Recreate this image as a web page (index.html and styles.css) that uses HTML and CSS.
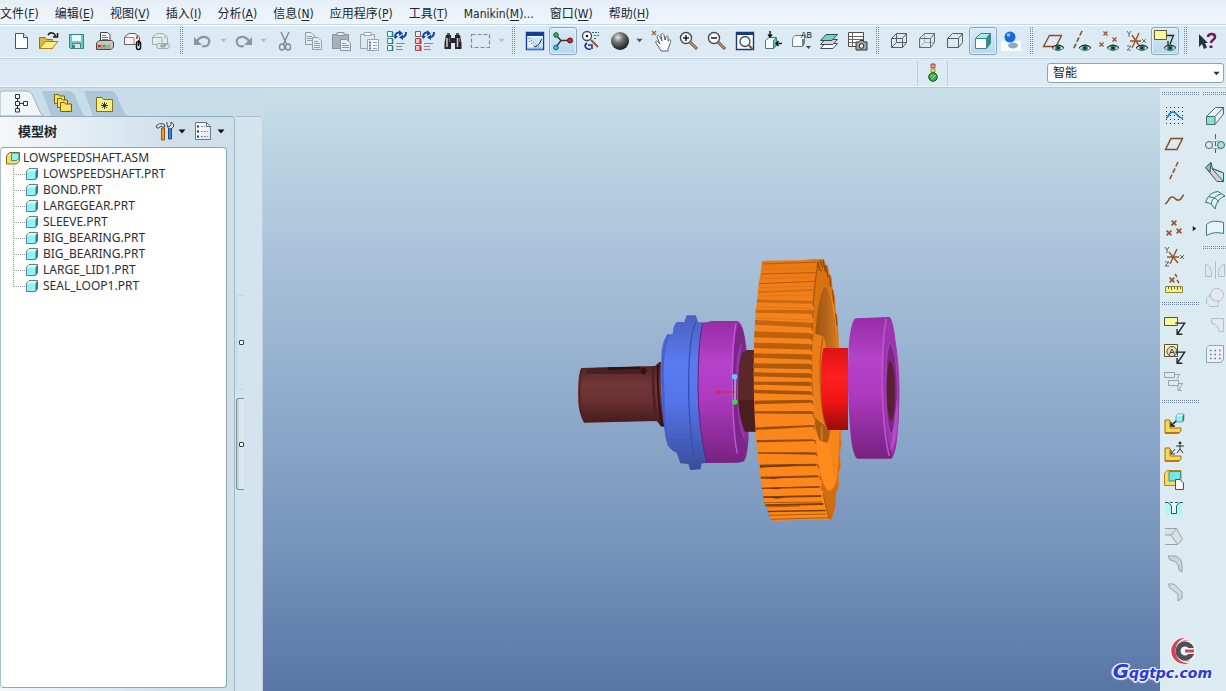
FILE: index.html
```html
<!DOCTYPE html>
<html lang="zh-CN">
<head>
<meta charset="utf-8">
<title>LOWSPEEDSHAFT</title>
<link rel="stylesheet" href="styles.css">
</head>
<body>
<svg class="defs" aria-hidden="true">
  <defs>
    <linearGradient id="sheet" x1="0" y1="0" x2="1" y2="1"><stop offset="0" stop-color="#fff"/><stop offset="1" stop-color="#dfe6ee"/></linearGradient>
    <radialGradient id="ball" cx=".38" cy=".3" r=".7"><stop offset="0" stop-color="#e8e8e8"/><stop offset=".4" stop-color="#777"/><stop offset="1" stop-color="#1c1c1c"/></radialGradient>
    <symbol id="eye" viewBox="0 0 12 8"><path d="M0 4Q6-2 12 4Q6 9 0 4Z" fill="#dfe9ee" stroke="#555" stroke-width=".8"/><circle cx="6" cy="4" r="2.8" fill="#287a6c"/><circle cx="6" cy="4" r="1.2" fill="#052b28"/><path d="M0 3.600Q6-1.500 12 3.600" fill="none" stroke="#222"/></symbol>
    <symbol id="part" viewBox="0 0 14 14"><path d="M1.500 4.500L4 1.500H12.500V9.500L10.500 12.500H1.500Z" fill="#8cf4f4" stroke="#5a8088"/><path d="M10.500 4V12.500L12.500 10V1.500Z" fill="#2f7a82"/><path d="M2 4.500L4 2H12L10.500 4.500Z" fill="#d4fcfc"/></symbol>
    <symbol id="asm" viewBox="0 0 15 14"><path d="M.500 4.500L3.500 1.500H13.500V10L10.500 13H.500Z" fill="#f6dc6a" stroke="#8c6a1c"/><path d="M5.500 2H13V7L10.500 9.500H5.500Z" fill="#8cf4f4" stroke="#3c6a74" stroke-width=".8"/></symbol>
    <symbol id="branch" viewBox="0 0 12 16"><path d="M.500 0V16M1 8.500H12" stroke="#9a9a9a" stroke-dasharray="1 1" fill="none"/></symbol>
    <symbol id="branch-end" viewBox="0 0 12 16"><path d="M.500 0V9M1 8.500H12" stroke="#9a9a9a" stroke-dasharray="1 1" fill="none"/></symbol>
    <symbol id="down" viewBox="0 0 8 5"><path d="M.500.500H7.500L4 4.500Z" fill="currentColor"/></symbol>
    <symbol id="cross" viewBox="0 0 5 5"><path d="M.500.500L4.500 4.500M4.500.500L.500 4.500" stroke="#97532a" stroke-width="1.300"/></symbol>
    <symbol id="leader" viewBox="0 0 10 12"><path d="M1 1H9L3 10M2.500 6V10.500H7" fill="none" stroke="currentColor" stroke-width="1.200"/></symbol>
    <symbol id="elbow" viewBox="0 0 18 15"><path d="M1 1H6V9H17V12L15 14H1Z" fill="#f7d94e" stroke="#a86c14"/><path d="M15 14H1" stroke="#c06010" stroke-width="1.500"/></symbol>
  </defs>
</svg>

<header>
<nav class="menubar" aria-label="菜单">
  <button>文件(<u>F</u>)</button><button>编辑(<u>E</u>)</button><button>视图(<u>V</u>)</button><button>插入(<u>I</u>)</button><button>分析(<u>A</u>)</button><button>信息(<u>N</u>)</button><button>应用程序(<u>P</u>)</button><button>工具(<u>T</u>)</button><button>Manikin(<u>M</u>)...</button><button>窗口(<u>W</u>)</button><button>帮助(<u>H</u>)</button>
</nav>

<div class="toolbar" role="toolbar" aria-label="工具栏">
  <button class="tool" aria-label="新建"><svg viewBox="0 0 24 24"><path d="M6.500 4.500H14.500L18.500 8.500V19.500H6.500Z" fill="#fff" stroke="#4c5058"/><path d="M14.500 4.500V8.500H18.500" fill="#dde4ec" stroke="#4c5058"/></svg></button>
  <button class="tool" aria-label="打开"><svg viewBox="0 0 24 24"><path d="M2.500 19.500V8.500H8L9.500 10.500H15.500V19.500Z" fill="#d9b840" stroke="#8d7420"/><path d="M2.500 19.500L8.500 12.500H21L15 19.500Z" fill="#ffec82" stroke="#a08424"/><path d="M11 6C13 3 17 3 18.500 7M20.500 4V8H16" fill="none" stroke="#111" stroke-width="1.500"/></svg></button>
  <button class="tool" aria-label="保存"><svg viewBox="0 0 24 24"><path d="M4.500 5.500H18.500V19.500H5.500L4.500 18.500Z" fill="#5fcfc9" stroke="#27888a"/><path d="M7 6H16V12H7Z" fill="#f4fafc"/><path d="M7.500 14.500H15.500V19.500H7.500Z" fill="#dde4e8" stroke="#4e7c88"/><path d="M9 16V19" stroke="#357" stroke-width="1.500"/></svg></button>
  <button class="tool" aria-label="打印"><svg viewBox="0 0 24 24"><path d="M7.500 12V3.500H14.500L17 6V12" fill="#fff" stroke="#444"/><path d="M9 6.500H13M9 8.500H15M9 10.500H15" stroke="#777"/><path d="M3.500 14L6 11.500H18.500L20.500 13V18L18 20.500H3.500Z" fill="#c9c9b8" stroke="#494940"/><path d="M4 15.500H17.500V20H4Z" fill="#a9a998"/><path d="M5 17H8" stroke="#e22" stroke-width="2"/><path d="M10 17H12" stroke="#3a3" stroke-width="2"/></svg></button>
  <button class="tool" aria-label="发送附件"><svg viewBox="0 0 24 24"><path d="M3.500 15.500V8L8 4.500H14L18.500 8V15.500Z" fill="#fbf1f2" stroke="#686068"/><path d="M3.500 8.500H13V15" fill="none" stroke="#96868c"/><path d="M16 7V10" stroke="#c22" stroke-width="1.500"/><rect x="15.500" y="12.500" width="4" height="8" rx="2" fill="none" stroke="#111" stroke-width="1.500"/><path d="M17.500 11V17" stroke="#111"/></svg></button>
  <button class="tool" aria-label="发送链接"><svg viewBox="0 0 24 24" fill="none" stroke="#9eabb2"><path d="M3.500 15.500V8L8 4.500H14L18.500 8V15.500Z" fill="#e3ecec"/><path d="M3.500 8.500H13V15M16 7V10"/><rect x="7.500" y="14.500" width="8" height="5" rx="2.500" fill="#dce8ee"/><rect x="12.500" y="14.500" width="8" height="5" rx="2.500"/><path d="M11 17H17" stroke="#77858c"/></svg></button>
  <span class="grip"></span>
  <span class="split"><button class="tool" aria-label="撤消"><svg viewBox="0 0 24 24"><path d="M6 12C11 5 20 8 18 14C17 17 14 18 11 17" fill="none" stroke="#8697a5" stroke-width="2.200"/><path d="M3 8V16H11Z" fill="#8697a5"/></svg></button><button class="drop off" aria-label="撤消列表"><svg><use href="#down"/></svg></button></span>
  <span class="split"><button class="tool" aria-label="重做"><svg viewBox="0 0 24 24"><path d="M18 12C13 5 4 8 6 14C7 17 10 18 13 17" fill="none" stroke="#8697a5" stroke-width="2.200"/><path d="M21 8V16H13Z" fill="#8697a5"/></svg></button><button class="drop off" aria-label="重做列表"><svg><use href="#down"/></svg></button></span>
  <button class="tool" aria-label="剪切"><svg viewBox="0 0 24 24" fill="none" stroke="#7c8994" stroke-width="1.400"><path d="M8 3L13.500 15M16 3L10.500 15"/><ellipse cx="9" cy="18" rx="2.500" ry="3"/><ellipse cx="15" cy="18" rx="2.500" ry="3"/></svg></button>
  <button class="tool" aria-label="复制"><svg viewBox="0 0 24 24" fill="#e4edf3" stroke="#93a0aa"><path d="M4.500 3.500H10L13.500 7V15.500H4.500Z"/><path d="M6 7.500H11M6 9.500H11M6 11.500H11"/><path d="M11.500 8.500H17L20.500 12V20.500H11.500Z"/><path d="M13 12.500H17M13 14.500H19M13 16.500H19M13 18.500H19"/></svg></button>
  <button class="tool" aria-label="粘贴"><svg viewBox="0 0 24 24" stroke="#89959e"><path d="M3.500 5.500H19.500V19.500H3.500Z" fill="#a7b1b9"/><path d="M8 6.500V3.500H15V6.500Z" fill="#dde7ed"/><path d="M11.500 10.500H17.500L21.500 14V21.500H11.500Z" fill="#e8f0f5"/><path d="M13 14.500H17M13 16.500H20M13 18.500H20"/></svg></button>
  <button class="tool" aria-label="选择性粘贴"><svg viewBox="0 0 24 24" stroke="#99a5ae"><path d="M3.500 5.500H17.500V19.500H3.500Z" fill="#dde8ef"/><path d="M7 6.500V3.500H14V6.500Z" fill="#eef4f7"/><path d="M10.500 10.500H21.500V21.500H10.500Z" fill="#eff5f8"/><path d="M12 13.500H14M12 16.500H14M12 19.500H14" stroke="#707d86" stroke-width="2"/><path d="M16 13.500H20M16 16.500H20M16 19.500H20"/></svg></button>
  <button class="tool" aria-label="再生"><svg viewBox="0 0 24 24"><g fill="#dff" stroke="#4f787c"><path d="M2.500 2.500H7.500V7.500H2.500ZM2.500 9.500H7.500V14.500H2.500ZM2.500 16.500H7.500V21.500H2.500Z"/></g><path d="M7.500 3V8M7.500 10V15M7.500 17V22" stroke="#1c8080" stroke-width="1.500"/><path d="M10 8C10 4 13 3 15 4M21 3C21 7 19 8 17 8" fill="none" stroke="#1547a8" stroke-width="2"/><path d="M14 1L18 4.500L14 7ZM18 5.500L14 8.500L18 11ZM8 7H13L10.500 10Z" fill="#1547a8"/><path d="M11 14.500H20M11 17.500H17M11 20.500H18" stroke="#889"/></svg></button>
  <button class="tool" aria-label="再生管理器"><svg viewBox="0 0 24 24"><g fill="#fbb" stroke="#875457"><path d="M2.500 2.500H7.500V7.500H2.500Z" fill="#eee"/><path d="M2.500 9.500H7.500V14.500H2.500ZM2.500 16.500H7.500V21.500H2.500Z"/></g><path d="M7.500 10V15M7.500 17V22" stroke="#c33" stroke-width="2"/><path d="M10 8C10 4 13 3 15 4M21 3C21 7 19 8 17 8" fill="none" stroke="#1547a8" stroke-width="2"/><path d="M14 1L18 4.500L14 7ZM18 5.500L14 8.500L18 11ZM8 7H13L10.500 10Z" fill="#1547a8"/><path d="M11 14.500H20M11 17.500H17M11 20.500H18" stroke="#889"/></svg></button>
  <button class="tool" aria-label="查找"><svg viewBox="0 0 24 24"><path d="M5 6H10V9H14V6H19L20.500 14V20H14V14H10V20H3.500V14Z" fill="#25252a"/><path d="M6 4H9V6H6ZM15 4H18V6H15Z" fill="#555"/><path d="M6 9V18M16.500 9V18" stroke="#d4d0bc" stroke-width="1.500"/><path d="M8 9L9 13M18 9L19 13" stroke="#888"/></svg></button>
  <span class="split"><button class="tool" aria-label="选取框"><svg viewBox="0 0 24 24"><rect x="2.500" y="5.500" width="18" height="13" fill="none" stroke="#7d8b96" stroke-width="1.200" stroke-dasharray="4 2"/></svg></button><button class="drop off" aria-label="选取方式"><svg><use href="#down"/></svg></button></span>
  <span class="grip"></span>
  <button class="tool" aria-label="重画"><svg viewBox="0 0 24 24"><path d="M3.500 3.500H20.500V20.500H3.500Z" fill="#fff" stroke="#153a90" stroke-width="1.400"/><path d="M3 3H21V7H3Z" fill="#163d96"/><path d="M5 8H20V19H14L5 12Z" fill="#c8e6ff"/><path d="M6 9L16 18M6 12L12 18" fill="none" stroke="#456" stroke-dasharray="1 2"/><path d="M11 18C17 17 17 12 19 10" fill="none" stroke="#222"/><path d="M4 19.500H20" stroke="#70b8f8" stroke-width="2"/></svg></button>
  <button class="tool on" aria-label="旋转中心"><svg viewBox="0 0 24 24"><path d="M5 6L10 11.500H20M10 11.500L5 18" fill="none" stroke="#333" stroke-width="1.300"/><circle cx="5" cy="6" r="2.300" fill="#2cb450" stroke="#165c2c"/><circle cx="19" cy="11.500" r="2.500" fill="#c1272d" stroke="#661013"/><circle cx="5" cy="18.500" r="2.300" fill="#31bed0" stroke="#136471"/></svg></button>
  <button class="tool" aria-label="定向模式"><svg viewBox="0 0 24 24" fill="none"><circle cx="8" cy="7" r="4.500" fill="#f8fcff" stroke="#454b52" stroke-width="1.300"/><circle cx="8" cy="7" r="1.200" fill="#111"/><path d="M12 11L19 18" stroke="#97532a" stroke-width="2"/><path d="M13 3.500H20M15 6.500H20M15 9.500H18" stroke="#2463a9" stroke-dasharray="2 1"/><path d="M8 14C4 17 7 21 12 20M9 16H13V20" stroke="#173e99" stroke-width="1.600"/></svg></button>
  <span class="split"><button class="tool" aria-label="外观库"><svg viewBox="0 0 24 24"><circle cx="13" cy="12" r="9" fill="url(#ball)"/></svg></button><button class="drop" aria-label="外观列表"><svg><use href="#down"/></svg></button></span>
  <button class="tool" aria-label="平移"><svg viewBox="0 0 24 24"><path d="M3 2L7 6M7 2L3 6" stroke="#a8622a" stroke-width="1.400"/><path d="M11 20L7 14C6 12 8 11 9 13L11 15L8 8C8 6 10 6 11 8L13 12L12 6C12 4 14 4 15 6L16 11L17 8C18 6 19 7 19 9L19 12L20 11C22 10 22 12 21 15L19 20V22H12Z" fill="#fff" stroke="#55606a"/></svg></button>
  <button class="tool" aria-label="放大"><svg viewBox="0 0 24 24"><circle cx="9" cy="9" r="5.500" fill="#fff" stroke="#45484d" stroke-width="1.400"/><path d="M6 9H12M9 6V12" stroke="#222" stroke-width="1.600"/><path d="M13 13L20 20" stroke="#5b4b43" stroke-width="3"/><path d="M13 13L19.500 19.500" stroke="#d49a60" stroke-width="1.200"/></svg></button>
  <button class="tool" aria-label="缩小"><svg viewBox="0 0 24 24"><circle cx="9" cy="9" r="5.500" fill="#fff" stroke="#45484d" stroke-width="1.400"/><path d="M6 9H12" stroke="#222" stroke-width="1.600"/><path d="M13 13L20 20" stroke="#5b4b43" stroke-width="3"/><path d="M13 13L19.500 19.500" stroke="#d49a60" stroke-width="1.200"/></svg></button>
  <button class="tool" aria-label="重新调整"><svg viewBox="0 0 24 24"><path d="M3.500 3.500H20.500V20.500H3.500Z" fill="#fff" stroke="#1a397b" stroke-width="1.400"/><path d="M3 3H21V6H3Z" fill="#1a397b"/><circle cx="12" cy="12.500" r="5" fill="#f0f8fc" stroke="#454a50" stroke-width="1.300"/><path d="M16 16.500L20 20.500" stroke="#87532a" stroke-width="2"/></svg></button>
  <button class="tool" aria-label="重定向"><svg viewBox="0 0 24 24"><path d="M4.500 11.500L8 8.500H15.500V16L12.500 19.500H4.500Z" fill="#f2ffff" stroke="#46747c"/><path d="M12.500 11.500V19.500L15.500 16V8.500Z" fill="#53c4bd" stroke="#387"/><path d="M9 2V8M7 5.500L9 8L11 5.500M21 14.500H15M17.500 12L15 14.500L17.500 17" fill="none" stroke="#111" stroke-width="1.400"/></svg></button>
  <button class="tool" aria-label="已命名视图"><svg viewBox="0 0 24 24"><path d="M3.500 9.500L6 6.500H15.500V14L13.500 17.500H3.500Z" fill="#f9feff" stroke="#698088"/><path d="M14 10V17" stroke="#698088" stroke-width="2"/><text x="12" y="9" class="ab">AB</text><path d="M17 17H22L19.500 20Z" fill="#444"/></svg></button>
  <button class="tool" aria-label="层"><svg viewBox="0 0 24 24" stroke="#414952"><path d="M3.500 19.500L8 14.500H20.500L16 19.500Z" fill="#fff"/><path d="M3.500 15.500L8 10.500H20.500L16 15.500Z" fill="#e5c9e7"/><path d="M3.500 11.500L9 5.500H20.500L15 11.500Z" fill="#62d7c8"/></svg></button>
  <button class="tool" aria-label="视图管理器"><svg viewBox="0 0 24 24"><path d="M3.500 3.500H18.500V17.500H3.500Z" fill="#fff" stroke="#4d4d4d"/><path d="M3.500 7.500H18M3.500 10.500H18M3.500 13.500H18M7.500 3.500V17" stroke="#666"/><path d="M11 13H14L15 11.500H18L19 13H22V21H11Z" fill="#a3a3a3" stroke="#333"/><circle cx="16.500" cy="17" r="2.300" fill="#eee" stroke="#222"/></svg></button>
  <span class="grip"></span>
  <button class="tool" aria-label="线框"><svg viewBox="0 0 24 24" fill="none" stroke="#595d60"><path d="M4.500 9.500H15.500V18.500H4.500ZM4.500 9.500L9.500 4.500H19.500L15.500 9.500M19.500 4.500V13.500L15.500 18.500M9.500 4.500V13.500L4.500 18.500M9.500 13.500H19.500"/></svg></button>
  <button class="tool" aria-label="隐藏线"><svg viewBox="0 0 24 24" fill="none" stroke="#696d70"><path d="M9.500 4.500V13.500L4.500 18.500M9.500 13.500H19.500" stroke="#a9b0b5"/><path d="M4.500 9.500H15.500V18.500H4.500ZM4.500 9.500L9.500 4.500H19.500L15.500 9.500M19.500 4.500V13.500L15.500 18.500"/></svg></button>
  <button class="tool" aria-label="消隐"><svg viewBox="0 0 24 24" fill="none" stroke="#595d60"><path d="M4.500 9.500H15.500V18.500H4.500ZM4.500 9.500L9.500 4.500H19.500L15.500 9.500M19.500 4.500V13.500L15.500 18.500"/></svg></button>
  <button class="tool on" aria-label="着色"><svg viewBox="0 0 24 24" stroke="#45858a"><path d="M4.500 9.500H15.500V19.500H4.500Z" fill="#fbffff"/><path d="M4.500 9.500L9.500 4.500H19.500L15.500 9.500Z" fill="#a4eee9"/><path d="M15.500 9.500L19.500 4.500V14.500L15.500 19.500Z" fill="#288f8c"/></svg></button>
  <button class="tool" aria-label="增强的真实感"><svg viewBox="0 0 24 24"><path d="M2 12H22V22H2Z" fill="#f9fcfe"/><ellipse cx="14" cy="16.500" rx="5" ry="3" fill="#91a9c2"/><circle cx="11" cy="8" r="5.500" fill="#176cdb"/><circle cx="9.500" cy="6" r="1.800" fill="#8fc1ff"/></svg></button>
  <span class="grip"></span>
  <button class="tool" aria-label="平面显示"><svg viewBox="0 0 24 24"><path d="M2.500 17.500L8.500 6.500H20.500L15 17.500Z" fill="none" stroke="#8a4d25" stroke-width="1.400"/><use href="#eye" x="11" y="15" width="12" height="8"/></svg></button>
  <button class="tool" aria-label="轴显示"><svg viewBox="0 0 24 24"><path d="M13 2L4 21" stroke="#8a4d25" stroke-width="1.600" stroke-dasharray="5 2"/><use href="#eye" x="10" y="15" width="12" height="8"/></svg></button>
  <button class="tool" aria-label="点显示"><svg viewBox="0 0 24 24"><use href="#cross" x="6" y="2" width="5" height="5"/><use href="#cross" x="15" y="8" width="5" height="5"/><use href="#cross" x="2" y="13" width="5" height="5"/><use href="#eye" x="10" y="15" width="12" height="8"/></svg></button>
  <button class="tool" aria-label="坐标系显示"><svg viewBox="0 0 24 24" fill="none"><path d="M5 12H16M14 4L7 19M7 6L15 18" stroke="#97532a" stroke-width="1.400"/><path d="M2 2L4 5L6 2M4 5V8M17 10L21 14M21 10L17 14M2 17H6L2 21H6" stroke="#66727a"/><use href="#eye" x="11" y="15" width="12" height="8"/></svg></button>
  <button class="tool on" aria-label="注释显示"><svg viewBox="0 0 24 24"><path d="M1.500 1.500H13.500V10.500H1.500Z" fill="#f9f7a0" stroke="#615f35"/><path d="M14 6.500H20.500L17 15M15 12V16" fill="none" stroke="#222" stroke-width="1.300"/><use href="#eye" x="11" y="15" width="12" height="8"/></svg></button>
  <span class="grip"></span>
  <button class="tool" aria-label="上下文帮助"><svg viewBox="0 0 24 24"><path d="M4 5V18L7 15L9 20L12 18.500L10 14H13Z" fill="#25343c"/><path d="M13 8C13 4 20 4 20 8C20 11 16 11 16 14" fill="none" stroke="#7c1366" stroke-width="2.600"/><path d="M14.500 16.500H17.500V19H14.500Z" fill="#7c1366"/></svg></button>
</div>

<div class="status">
  <div class="lamp"><svg viewBox="0 0 12 20"><path d="M4 1H8V5H4Z" fill="#e09898" stroke="#a46"/><path d="M4 6H8V9H4Z" fill="#f0e878" stroke="#a90"/><circle cx="6" cy="14" r="4.300" fill="#35ad4a" stroke="#14501f"/><path d="M3.500 14L6 11.500M5 16L8.500 12" stroke="#a5f0a5"/></svg></div>
  <div class="filter"><select aria-label="选取过滤器"><option>智能</option></select><svg class="filter-arrow"><use href="#down"/></svg></div>
</div>
</header>

<main>
<aside class="navigator">
  <div class="tabs" role="tablist">
    <button role="tab" class="tab current" aria-label="模型树"><svg class="tab-shape" viewBox="0 0 44 26" preserveAspectRatio="none"><path d="M0 26V3Q0 1 2 1H26Q30 1 32 4L39 20Q41 25 44 26Z" fill="#f1f6fa" stroke="#9fb3c4"/></svg><svg class="tab-icon" viewBox="0 0 20 20" fill="none" stroke="#30343a"><path d="M4.500 1.500H8.500V5.500H4.500ZM4.500 8.500H8.500V12.500H4.500ZM12.500 8.500H16.500V12.500H12.500ZM4.500 15.500H8.500V19H4.500ZM6.500 5.500V8.500M8.500 10.500H12.500M6.500 12.500V15.500"/></svg></button>
    <button role="tab" class="tab" aria-label="文件夹浏览器"><svg class="tab-shape" viewBox="0 0 44 26" preserveAspectRatio="none"><path d="M0 1H26Q30 1 32 4L39 20Q41 25 44 26H9Z" fill="#adc7da"/></svg><svg class="tab-icon" viewBox="0 0 20 20" fill="#fbe45c" stroke="#725e17"><path d="M1.500 3V1.500H5.500L6.500 3H11.500V10.500H1.500Z"/><path d="M4.500 7V5.500H8.500L9.500 7H14.500V14.500H4.500Z"/><path d="M7.500 11V9.500H11.500L12.500 11H18.500V18.500H7.500Z"/></svg></button>
    <button role="tab" class="tab" aria-label="收藏夹"><svg class="tab-shape" viewBox="0 0 44 26" preserveAspectRatio="none"><path d="M0 1H26Q30 1 32 4L39 20Q41 25 44 26H9Z" fill="#adc7da"/></svg><svg class="tab-icon" viewBox="0 0 20 20"><path d="M1.500 6V4.500H7L8.500 6.500H17.500V18.500H1.500Z" fill="#fdf07c" stroke="#857019"/><path d="M9.500 9V16M6 12.500H13M7 10L12 15M12 10L7 15" stroke="#173c8c"/></svg></button>
  </div>
  <div class="nav-body">
    <section class="tree-panel">
      <div class="tree-head">
        <h2>模型树</h2>
        <button class="tree-tool" aria-label="设置"><svg class="i20" viewBox="0 0 20 20"><path d="M1 5Q4 1 9 3L10 6H7L6 5L4 7H2Z" fill="#d5dade" stroke="#4c555c"/><path d="M6.500 7H9.500V19H6.500Z" fill="#f49a27" stroke="#96520c"/><path d="M12 1V4L14 6L16 4V1L18.500 3V6L16 8H14L12 5" fill="#dee4e9" stroke="#47515a"/><path d="M13.500 8H16.500V18H13.500Z" fill="#3c88cf" stroke="#1b4b82"/></svg><svg class="i8"><use href="#down"/></svg></button>
        <button class="tree-tool" aria-label="显示"><svg class="i20" viewBox="0 0 20 20"><path d="M1.500 1.500H12.500L16.500 5.500V18.500H1.500Z" fill="url(#sheet)" stroke="#697889"/><path d="M12.500 1.500V5.500H16.500" fill="none" stroke="#596879"/><path d="M3 5.500H5M3 10.500H5M3 15.500H5" stroke="#333" stroke-width="2"/><path d="M7 5.500H11M7 10.500H14M7 15.500H14" stroke="#889" stroke-dasharray="2 1"/></svg><svg class="i8"><use href="#down"/></svg></button>
      </div>
      <div class="tree">
        <div class="root"><svg><use href="#asm"/></svg>LOWSPEEDSHAFT.ASM</div>
        <ul>
          <li><svg class="br"><use href="#branch"/></svg><svg class="pt"><use href="#part"/></svg>LOWSPEEDSHAFT.PRT</li>
          <li><svg class="br"><use href="#branch"/></svg><svg class="pt"><use href="#part"/></svg>BOND.PRT</li>
          <li><svg class="br"><use href="#branch"/></svg><svg class="pt"><use href="#part"/></svg>LARGEGEAR.PRT</li>
          <li><svg class="br"><use href="#branch"/></svg><svg class="pt"><use href="#part"/></svg>SLEEVE.PRT</li>
          <li><svg class="br"><use href="#branch"/></svg><svg class="pt"><use href="#part"/></svg>BIG_BEARING.PRT</li>
          <li><svg class="br"><use href="#branch"/></svg><svg class="pt"><use href="#part"/></svg>BIG_BEARING.PRT</li>
          <li><svg class="br"><use href="#branch"/></svg><svg class="pt"><use href="#part"/></svg>LARGE_LID1.PRT</li>
          <li><svg class="br"><use href="#branch-end"/></svg><svg class="pt"><use href="#part"/></svg>SEAL_LOOP1.PRT</li>
        </ul>
      </div>
    </section>
    <div class="sash"><button class="handle" aria-label="折叠"></button><button class="handle strong" aria-label="展开"></button></div>
  </div>
</aside>

<section class="viewport" aria-label="模型">
<svg class="scene" viewBox="263 88 897 603">
  <defs>
    <linearGradient id="shaft" x1="0" y1="0" x2="0" y2="1"><stop offset="0" stop-color="#4c2020"/><stop offset=".35" stop-color="#713638"/><stop offset=".6" stop-color="#6b3031"/><stop offset="1" stop-color="#421717"/></linearGradient>
    <linearGradient id="blue" x1="0" y1="0" x2="0" y2="1"><stop offset="0" stop-color="#4960bd"/><stop offset=".3" stop-color="#597bf0"/><stop offset=".55" stop-color="#5576ea"/><stop offset="1" stop-color="#3a4c9c"/></linearGradient>
    <linearGradient id="violet" x1="0" y1="0" x2="0" y2="1"><stop offset="0" stop-color="#972ca6"/><stop offset=".3" stop-color="#b543c9"/><stop offset=".55" stop-color="#ad39bf"/><stop offset="1" stop-color="#762280"/></linearGradient>
    <linearGradient id="red" x1="0" y1="0" x2="0" y2="1"><stop offset="0" stop-color="#dc1212"/><stop offset=".35" stop-color="#ff2020"/><stop offset=".65" stop-color="#ef1515"/><stop offset="1" stop-color="#980a0a"/></linearGradient>
    <linearGradient id="gear" x1="0" y1="0" x2="0" y2="1"><stop offset="0" stop-color="#e97813"/><stop offset=".2" stop-color="#f5831c"/><stop offset="1" stop-color="#ff881a"/></linearGradient>
    <linearGradient id="face" x1="0" y1="0" x2="0" y2="1"><stop offset="0" stop-color="#d8720f"/><stop offset=".6" stop-color="#dd7412"/><stop offset="1" stop-color="#cf6a10"/></linearGradient>
    <linearGradient id="recess" x1="0" y1="0" x2="1" y2="0"><stop offset="0" stop-color="#9c530f"/><stop offset=".5" stop-color="#b5651a"/><stop offset="1" stop-color="#d37a22"/></linearGradient>
    <linearGradient id="tooth" x1="0" y1="0" x2="0" y2="1"><stop offset="0" stop-color="#d06c12"/><stop offset=".5" stop-color="#a25209"/><stop offset="1" stop-color="#7c3e08"/></linearGradient>
  </defs>
  <svg x="560" y="240" width="360" height="300" viewBox="0 0 1080 900">
    <path d="M64 384L285 378L298 366H320V560H304L290 543L72 548Q54 520 54 465Q54 400 64 384Z" fill="url(#shaft)"/>
    <path d="M78 402Q80 386 92 384L245 380Q262 384 260 392Q256 404 246 403Z" fill="#4a1d1e"/><path d="M145 382L240 380V386L145 390Z" fill="#2c1010"/><ellipse cx="251" cy="393" rx="8" ry="10" fill="#351213"/><path d="M82 405H246" stroke="#6d3738" stroke-width="3"/>
    <path d="M66 388Q56 430 60 500L74 544" fill="none" stroke="#4d2222" stroke-width="4"/>
    <path d="M280 380Q276 450 290 543" fill="none" stroke="#4d2021" stroke-width="8"/><path d="M294 374Q290 460 306 556" fill="none" stroke="#351111" stroke-width="6"/>
    <path d="M375 240L380 226H407L415 247H440V668L424 671L422 688L391 690L385 672L361 670L350 638Q324 630 317 595Q296 450 304 335Q310 292 325 283L338 282Q340 255 350 246H373Z" fill="url(#blue)"/>
    <path d="M408 246Q385 285 386 455Q390 630 414 682" fill="none" stroke="#3a4fac" stroke-width="4"/>
    <path d="M325 284Q302 340 310 460Q312 570 328 620" fill="none" stroke="#4560c8" stroke-width="7"/>
    <path d="M428 250L455 243H532Q550 249 557 310Q572 380 565 600Q562 650 552 664L535 668L440 669Q415 560 414 445Q414 310 428 250Z" fill="url(#violet)"/>
    <path d="M428 250Q414 310 414 445Q415 560 440 669" fill="none" stroke="#5b247d" stroke-width="3"/>
    <path d="M534 250Q552 260 557 318L550 600Q560 620 566 590Q564 630 546 640Q532 640 526 580Q514 460 522 330Q526 270 534 250Z" fill="#7a2789"/>
    <path d="M528 250Q513 330 518 480Q522 600 532 640" fill="none" stroke="#c556d6" stroke-width="4"/>
    <path d="M545 312Q525 350 532 465Q538 570 552 592" fill="#8d2d9c" stroke="#a844ba" stroke-width="3"/>
    <path d="M545 340L560 330H610V575H555Q530 510 535 425Q536 370 545 340Z" fill="#592829"/>
    <path d="M535 480H600V575H555Q535 530 535 480Z" fill="#431a1b" opacity=".65"/>
    <path d="M615 62L720 61L760 57L792 58L798 77L803 76L808 104L814 110L818 150L825 170L827 220L833 235L836 310Q850 430 846 550L841 585L845 610L839 640L842 680L835 700L836 740L828 760L826 800L815 838L635 842L620 800L610 770L600 700L592 640L588 590Q575 430 587 210L592 178L596 130L601 105L606 64Z" fill="url(#gear)"/>
    <path d="M770 66L792 58L798 77L803 76L808 104L814 110L818 150L825 170L827 220L833 235L836 310Q850 430 846 550L841 585L845 610L839 640L842 680L835 700L836 740L828 760L826 800L815 838H806Q770 690 757 500Q746 230 770 66Z" fill="url(#face)"/>
    <path d="M774 66L779 90L786 92M780 60L788 84M788 60L797 96M797 76L804 112M808 104L812 140M818 150L821 190M827 220L830 255" stroke="#91490a" stroke-width="4" fill="none"/>
    <path d="M795 140Q818 140 830 270Q848 520 830 720Q820 755 805 752Q780 735 768 600Q755 440 768 270Q777 150 795 140Z" fill="#ff8b1d"/>
    <path d="M795 140Q818 140 833 325H800L766 285Q775 155 795 140Z" fill="url(#recess)"/>
    <path d="M773 600H802Q812 590 810 565H836V600Q838 650 824 720Q812 640 806 605Z" fill="#f6851c"/>
    <path d="M764 280Q772 284 792 290L800 325V604L802 608L779 602Q752 530 752 430Q753 335 764 280Z" fill="#ed7e17"/><path d="M762 530L810 570Q811 590 802 608L779 602Q765 570 762 530Z" fill="#ab5c10"/><path d="M785 558V604" stroke="#d77a20" stroke-width="5"/>
    <path d="M789 290Q775 360 783 465Q788 545 803 575" fill="none" stroke="#b8620f" stroke-width="4"/>
    <g stroke="#b15a0c" fill="none" stroke-width="3">
      <path d="M608 72L774 66M604 102L767 98M598 131L765 124M620 801L720 798M612 788L786 786M626 826L798 822M632 838L806 833"/>
    </g>
    <g stroke="#d96f12" fill="none" stroke-width="2"><path d="M612 88L772 84M604 116L768 112M600 143L764 138M597 168L762 165M592 200L758 206M590 235L757 240"/></g>
    <g fill="url(#tooth)">
      <path d="M596 154L763 147V152L596 159ZM592 178L760 183V191L590 187ZM587 209L758 210V222L587 218ZM585 240L757 248V263L585 254ZM583 274L757 280V297L583 292ZM582 308L755 312V329L582 324ZM581 340L754 343V359L581 353ZM580 370L754 371V388L580 384ZM580 397L753 400V414L580 409ZM581 425L753 425V438L581 434ZM582 449L754 454V464L582 460ZM584 482L757 479V488L584 493ZM585 514L758 513V522L585 520ZM587 562L762 555V560L587 570ZM590 600L766 598V603L590 607ZM594 637L768 637V644L594 641ZM598 674L770 671V678L600 680ZM602 710L775 706V712L602 716ZM605 743L779 738V743L605 747ZM610 769L784 765V771L610 774ZM616 793L790 789V795L616 799ZM623 812L797 809V814L623 817Z"/>
    </g>
    <path d="M600 678L720 673L690 679L600 683ZM602 713L680 711L640 717ZM606 744L675 742L650 748ZM610 770L685 770L650 776Z" fill="#703604"/>
    <path d="M774 66Q748 230 757 470Q764 690 808 836" fill="none" stroke="#a5540c" stroke-width="3"/>
    <g fill="#f98720"><path d="M756 192L762 205L759 212L754 210ZM753 224L760 240L757 250L752 247ZM751 265L760 275L757 283L751 281ZM751 299L758 306L756 314L751 312ZM750 331L757 337L755 346L750 344ZM750 360L757 366L755 374L750 372ZM750 389L757 395L755 402L750 400ZM750 415L757 420L755 427L750 425ZM750 440L758 447L756 456L750 454ZM753 466L761 472L759 482L753 480ZM754 490L763 500L761 515L754 513ZM755 524L765 540L764 556L755 556ZM759 562L769 580L768 600L759 599ZM763 606L773 620L772 638L763 637ZM767 646L777 655L777 673L767 672ZM772 681L782 690L781 708L772 706ZM776 715L786 724L785 740L776 738ZM781 747L790 754L789 767L781 765Z"/></g>
    <path d="M790 324H864V570H804Q783 525 783 440Q781 370 790 324Z" fill="url(#red)"/>
    <path d="M886 235L988 231Q1000 240 1006 300Q1018 360 1019 460Q1018 540 1008 620Q1002 648 994 656H891Q875 640 870 560Q860 440 866 320Q872 246 886 235Z" fill="url(#violet)"/>
    <path d="M984 234Q1000 245 1006 310Q1018 380 1017 500Q1014 620 998 645Q975 600 970 446Q970 290 984 234Z" fill="#9d34ad"/>
    <path d="M978 236Q962 340 968 480Q974 600 988 648" fill="none" stroke="#b954ca" stroke-width="5"/>
    <path d="M990 307Q1010 330 1012 450Q1010 570 992 583Q978 550 978 445Q978 330 990 307Z" fill="#7b2788" stroke="#a745b6" stroke-width="3"/>
    <path d="M1010 480Q1020 530 1006 600Q1000 630 990 630Q998 590 1010 480Z" fill="#b54bc6"/>
    <path d="M989 362Q1004 370 1005 460Q1003 540 992 542Q980 520 980 450Q980 380 989 362Z" fill="#57222f"/>
    <path d="M525 412V480" stroke="#dff" stroke-width="3"/><path d="M474 456H526" stroke="#e5203d" stroke-width="3"/><circle cx="474" cy="456" r="5" fill="#e5203d"/><circle cx="524" cy="410" r="8" fill="#57cdf3"/><circle cx="525" cy="486" r="8" fill="#36dc35"/>
  </svg>
</svg>
</section>

<aside class="feature-bar" role="toolbar" aria-label="特征工具">
  <div class="column wide">
    <span class="hgrip"></span>
    <button class="tool" aria-label="草绘"><svg viewBox="0 0 24 24"><path d="M4 3.500H21M4 7.500H21M4 11.500H21M4 15.500H21M4 19.500H21" stroke="#333" stroke-dasharray="1 3"/><path d="M4 14C7 14 6 8 11 8C16 8 14 14 21 14" fill="none" stroke="#1977bd" stroke-width="1.600"/></svg></button>
    <button class="tool" aria-label="平面"><svg viewBox="0 0 24 24"><path d="M3.500 17.500L9 6.500H20.500L15 17.500Z" fill="none" stroke="#8a4d25" stroke-width="1.500"/></svg></button>
    <button class="tool" aria-label="轴"><svg viewBox="0 0 24 24"><path d="M16 2L7 21" stroke="#97532a" stroke-width="1.600" stroke-dasharray="5 2"/></svg></button>
    <button class="tool" aria-label="曲线"><svg viewBox="0 0 24 24"><path d="M3 16C7 15 6 9 10 9C14 9 13 13 17 12C20 12 20 7 22 7" fill="none" stroke="#8a4d25" stroke-width="1.600"/></svg></button>
    <span class="split"><button class="tool" aria-label="点"><svg viewBox="0 0 24 24"><use href="#cross" x="9" y="4" width="6" height="6"/><use href="#cross" x="4" y="14" width="6" height="6"/><use href="#cross" x="14" y="12" width="6" height="6"/></svg></button><button class="drop" aria-label="点选项"><svg viewBox="0 0 8 8"><path d="M2 1L6 4L2 7Z" fill="#222"/></svg></button></span>
    <button class="tool" aria-label="坐标系"><svg viewBox="0 0 24 24" fill="none"><path d="M5 13H17M15 5L8 20M7 8L16 19" stroke="#97532a" stroke-width="1.400"/><path d="M3 3L5 6L7 3M5 6V9M18 11L22 15M22 11L18 15M3 18H7L3 22H7" stroke="#59656c"/></svg></button>
    <button class="tool" aria-label="测量"><svg viewBox="0 0 24 24"><use href="#cross" x="7" y="5" width="6" height="6"/><path d="M13 2L15 5M15 8L17 11" stroke="#97532a" stroke-width="1.500"/><path d="M3.500 14.500H20.500V20.500H3.500Z" fill="#faf186" stroke="#8f843c"/><path d="M6.500 15V17M9.500 15V18M12.500 15V17M15.500 15V18M18.500 15V17" stroke="#70682d"/></svg></button>
    <span class="hgrip"></span>
    <button class="tool" aria-label="注释"><svg viewBox="0 0 24 24"><path d="M2.500 3.500H15.500V11.500H2.500Z" fill="#fbf8a2" stroke="#555339"/><use href="#leader" x="12" y="8" width="12" height="14"/></svg></button>
    <button class="tool" aria-label="注释特征"><svg viewBox="0 0 24 24"><path d="M2.500 2.500H15.500V14.500H2.500Z" fill="#fbf8a2" stroke="#555339"/><circle cx="10" cy="9.500" r="5" fill="#e6dfbd" stroke="#4d4d4d"/><path d="M7 13L10 7L13 13M8 10.500H12" fill="none" stroke="#444"/><use href="#leader" x="12" y="9" width="12" height="14"/></svg></button>
    <button class="tool dim" aria-label="传播注释"><svg viewBox="0 0 24 24" fill="none" stroke="currentColor"><path d="M2.500 2.500H12.500V7.500H2.500ZM6.500 10.500H16.500V15.500H6.500ZM13 4.500H17.500L15 9M16.500 13.500H20.500L17 20M16 16V20.500H20"/></svg></button>
    <span class="hgrip"></span>
    <button class="tool" aria-label="装配"><svg viewBox="0 0 24 24"><use href="#elbow" x="2" y="7" width="18" height="15"/><use href="#part" x="13" y="1" width="10" height="10"/><path d="M14 9L9 14M9 10V14H13" fill="none" stroke="#222" stroke-width="1.500"/></svg></button>
    <button class="tool" aria-label="插入人体模型"><svg viewBox="0 0 24 24"><use href="#elbow" x="2" y="7" width="18" height="15"/><circle cx="18" cy="3" r="1.500" fill="#333"/><path d="M14 6H22M18 5V9L15 13M18 9L21 13M13 9L9 14M9 10V14H13" fill="none" stroke="#333"/></svg></button>
    <button class="tool" aria-label="创建元件"><svg viewBox="0 0 24 24"><path d="M2.500 5.500L5 2.500H19V15L16 17.500H2.500Z" fill="#f7da60" stroke="#bd811a"/><path d="M7 3.500H18.500V10L16 13H7Z" fill="#71e8e8" stroke="#3d9090"/><path d="M13.500 11.500H18L21.500 15V21.500H13.500Z" fill="#fff" stroke="#4d5459"/></svg></button>
    <button class="tool" aria-label="孔"><svg viewBox="0 0 24 24"><path d="M4 7H20V19H4Z" fill="#aff5f0"/><path d="M3 6.500H7L9.500 9.500V17.500H14.500V9.500L17 6.500H21" fill="#e6fcfc"/><path d="M3 6.500H21" stroke="#285d68" stroke-dasharray="3 2"/><path d="M6 6.500L9.500 9.500V17.500H14.500V9.500L18 6.500" fill="none" stroke="#285d68"/></svg></button>
    <button class="tool dim" aria-label="拔模"><svg viewBox="0 0 24 24" fill="#dbe1e0" stroke="currentColor"><path d="M3 4.500H14.500L20.500 15.500L15.500 20.500L9 11H3M14.500 4.500L9 11M3 20.500H15.500"/></svg></button>
    <button class="tool dim" aria-label="倒圆角"><svg viewBox="0 0 24 24"><path d="M6 4H13Q20 6 20 13V20L17 18Q17 9 8 8Z" fill="#cdd4d4" stroke="currentColor"/></svg></button>
    <button class="tool dim" aria-label="倒角"><svg viewBox="0 0 24 24"><path d="M6 4H12L20 12V18L16 21V14L8 8Z" fill="#d3dada" stroke="currentColor"/></svg></button>
  </div>
  <div class="column">
    <span class="hgrip"></span>
    <button class="tool" aria-label="拉伸"><svg viewBox="0 0 24 24" stroke="#50666c"><path d="M3.500 12.500L12.500 3.500H20.500V10L12 20.500Z" fill="#e5f1f4"/><path d="M3.500 12.500H12V20.500H3.500Z" fill="#7fe3d0"/><path d="M12 12.500L20.500 3.500"/></svg></button>
    <button class="tool" aria-label="旋转"><svg viewBox="0 0 24 24" fill="none" stroke="#4a6069"><circle cx="6" cy="13" r="3.500"/><circle cx="18" cy="13" r="3.500" fill="#9ee4d7"/><path d="M12.500 2V22" stroke-dasharray="5 2"/><path d="M8 10L16 9M8 16L16 17" stroke="#8aa"/></svg></button>
    <button class="tool" aria-label="可变截面扫描"><svg viewBox="0 0 24 24" stroke="#405a61"><path d="M2.500 7.500L8 2.500L9.500 8.500L20.500 13V21.500H14L7 13Z" fill="#d7ccd8"/><path d="M2.500 7.500L8 2.500L7 12Z" fill="#68d7bc"/><path d="M9 8.500L20.500 13V21.500Z" fill="#b5efe2"/></svg></button>
    <button class="tool" aria-label="边界混合"><svg viewBox="0 0 24 24" fill="#ddf6f5" stroke="#456b6d"><path d="M2.500 14.500Q6 4 15 3.500L22 8Q14 10 12 21Q8 14 2.500 14.500Z"/><path d="M6 9Q13 9 16 14M8 16Q10 8 18 6" fill="none"/></svg></button>
    <button class="tool" aria-label="造型"><svg viewBox="0 0 24 24"><path d="M3.500 19.500V8.500Q9 3 20.500 6.500V17.500Q11 15 3.500 19.500Z" fill="#e2f5f7" stroke="#4d767f"/></svg></button>
    <span class="hgrip"></span>
    <button class="tool faint" aria-label="镜像"><svg viewBox="0 0 24 24" fill="#dfe7ec" stroke="currentColor"><path d="M2.500 6.500Q9 7 8.500 18.500H2.500ZM21.500 6.500Q15 7 15.500 18.500H21.500ZM12.500 3V21"/></svg></button>
    <button class="tool faint" aria-label="合并"><svg viewBox="0 0 24 24" fill="#e1e9ee" stroke="currentColor"><circle cx="14" cy="9" r="6.500"/><path d="M7 8.500L3.500 13V17L7 20.500H15V15Q7 15 7 8.500Z"/></svg></button>
    <button class="tool faint" aria-label="修剪"><svg viewBox="0 0 24 24"><path d="M8.500 4.500H20.500V17.500H16Q16 11 8.500 9Z" fill="#e1e9ee" stroke="currentColor"/></svg></button>
    <button class="tool dim" aria-label="阵列"><svg viewBox="0 0 24 24"><path d="M3.500 6L6 3.500H20.500V17L18 20.500H3.500Z" fill="#eaf0f4" stroke="currentColor"/><path d="M7 8.500H18M7 12.500H18M7 16.500H18" stroke="#6c767c" stroke-width="1.500" stroke-dasharray="1.500 3"/></svg></button>
  </div>
</aside>
<div class="watermark"><svg viewBox="0 0 28 28"><circle cx="14" cy="14" r="13" fill="#f3f2f3"/><path d="M17 1A13 13 0 1 0 20 26A11.500 12 0 0 1 17 1Z" fill="#cf4556"/><path d="M21 3A11 11 0 1 0 22 24A10 10 0 1 1 21 3Z" fill="#e3939b"/><circle cx="16" cy="14" r="7" fill="none" stroke="#4d5057" stroke-width="5"/><path d="M16 14H27" stroke="#f3f2f3" stroke-width="6"/><path d="M16 14H25" stroke="#d54556" stroke-width="3"/></svg><p><b>G</b>qgtpc.com</p></div>
</main>
</body>
</html>
```
FILE: styles.css
```css
* { box-sizing: border-box; }
html, body { height: 100%; }
body {
  margin: 0;
  display: flex;
  flex-direction: column;
  overflow: hidden;
  background: #dbe9f2;
  color: #20262e;
  font: 12px/16px "Noto Sans", "Noto Sans CJK SC", sans-serif;
}
button { padding: 0; border: 0; background: none; color: inherit; font: inherit; }
svg { display: block; flex: none; }
.defs { position: absolute; width: 0; height: 0; }

.menubar {
  display: flex;
  gap: 16px;
  height: 24px;
  padding-top: 4px;
  background: linear-gradient(#e6eff8, #f0f5fb);
  font-family: "DejaVu Sans Condensed", "Noto Sans", "Noto Sans CJK SC", sans-serif;
}
.menubar button { flex: none; height: 20px; line-height: 20px; white-space: nowrap; }
.menubar u { text-underline-offset: 2px; }

.toolbar {
  display: flex;
  align-items: center;
  height: 35px;
  padding: 0 0 2px 7px;
  border-top: 1px solid #c2d8e8;
  border-bottom: 1px solid #c0d4e2;
  box-shadow: inset 0 1px #f6fbfe, inset 0 -1px #f0f8fc;
  background: #dceaf3;
}
.tool {
  display: flex;
  align-items: center;
  justify-content: center;
  flex: none;
  width: 28px;
  height: 28px;
}
.tool svg { width: 24px; height: 24px; }
.toolbar .on {
  border: 1px solid #8da8bd;
  border-radius: 3px;
  background: linear-gradient(#d9ebf7, #b7d7ed);
  box-shadow: inset 0 0 1px 1px #e4f1f9;
}
.toolbar .on svg { width: 24px; }
.dim { color: #97a3ab; }
.faint { color: #b3bfc7; }
.split { display: flex; flex: none; align-items: center; }
.drop { display: flex; align-items: center; justify-content: center; width: 12px; height: 28px; color: #465360; }
.drop svg { width: 7px; height: 7px; }
.drop.off { color: #b0bec9; }
.split + .tool { margin-left: 2px; }
.feature-bar .split + .tool { margin-left: 0; }
.grip {
  flex: none;
  width: 4px;
  height: 28px;
  margin: 0 6px 0 4px;
  background: conic-gradient(#6f87a0 25%, transparent 0) 0 0 / 2px 2px;
}
.ab { font: 9px "Liberation Mono", monospace; fill: #222; }

.status {
  display: flex;
  align-items: center;
  justify-content: flex-end;
  height: 29px;
  padding-right: 2px;
  border-bottom: 1px solid #b5cad9;
  box-shadow: inset 0 -1px #f3f9fc;
  background: #dceaf3;
}
.lamp {
  display: flex;
  align-items: center;
  justify-content: center;
  width: 31px;
  height: 25px;
  margin-right: 99px;
  border: 1px solid #bacfdd;
  border-width: 0 1px;
}
.lamp svg { width: 12px; height: 20px; }
.filter { position: relative; width: 177px; }
.filter select {
  display: block;
  width: 100%;
  height: 20px;
  padding: 0 5px;
  border: 1px solid #8da4b8;
  border-radius: 3px;
  appearance: none;
  background: #fff;
  color: #222;
  font: inherit;
}
.filter-arrow { position: absolute; top: 8px; right: 4px; width: 7px; height: 5px; color: #333; pointer-events: none; }

main { position: relative; display: flex; flex: 1; min-height: 0; }
.navigator { display: flex; flex-direction: column; flex: none; width: 263px; background: #d3e4ee; }
.tabs { display: flex; flex: none; height: 28px; padding-top: 2px; background: #c9dce9; }
.tab { position: relative; width: 42px; height: 26px; }
.tab-shape { position: absolute; inset: 0; width: 44px; height: 26px; }
.tab-icon { position: relative; width: 20px; height: 20px; margin-left: 11px; }
.nav-body { display: flex; flex: 1; min-height: 0; }
.tree-panel {
  display: flex;
  flex-direction: column;
  width: 235px;
  padding: 0 7px 3px 0;
  border-top: 1px solid #92abc0;
  border-right: 1px solid #a2b8c9;
  border-top-right-radius: 4px;
  background: linear-gradient(90deg, #f4f8fb, #cfe0eb 75%);
}
.tree-head { display: flex; align-items: center; flex: none; height: 30px; padding: 0 2px 2px 18px; }
.tree-head h2 { flex: 1; margin: 0; font-size: 13px; line-height: 20px; font-weight: bold; }
.tree-tool { display: flex; align-items: center; gap: 3px; margin-left: 8px; color: #111; }
.i20 { width: 20px; height: 20px; }
.i8 { width: 8px; height: 5px; }
.tree {
  flex: 1;
  border: 1px solid #8ba4ba;
  border-left-color: #a9bdcd;
  border-radius: 4px;
  padding: 2px 0 0 5px;
  background: #fff;
  color: #2c2f33;
}
.root, .tree li { display: flex; align-items: center; height: 16px; white-space: nowrap; }
.root svg { width: 15px; height: 14px; margin-right: 2px; }
.tree ul { margin: 0; padding: 0 0 0 7px; list-style: none; }
.br { width: 12px; height: 16px; }
.pt { width: 14px; height: 14px; margin-right: 4px; }
.sash {
  display: flex;
  flex-direction: column;
  flex: 1;
  gap: 8px;
  padding: 178px 18px 0 1px;
  border-top: 1px solid #a9becd;
  border-right: 1px solid #bcd0dd;
  border-top-right-radius: 4px;
}
.handle {
  display: flex;
  align-items: center;
  width: 8px;
  height: 95px;
  border: 1px solid #c3d5de;
  border-right: 0;
  border-radius: 3px 0 0 3px;
  padding-left: 2px;
}
.handle::before { content: ""; width: 3px; height: 3px; border: 1px solid #32424c; border-radius: 1px; background: #fff; }
.handle.strong { height: 92px; border-color: #7e8d96; background: linear-gradient(90deg, #b8c8d2, #dce9f0 40%); }

.viewport { flex: 1; min-width: 0; background: linear-gradient(#c8dee9, #a9c2d9 28%, #7895bd 75%, #5875a6); }
.scene { width: 100%; height: 100%; }

.feature-bar { display: flex; flex: none; width: 66px; overflow: hidden; background: #dceaf2; }
.column { display: flex; flex-direction: column; flex: none; width: 28px; }
.column.wide { width: 41px; }
.hgrip {
  flex: none;
  height: 4px;
  margin: 4px 1px 6px;
  background: conic-gradient(#6f87a0 25%, transparent 0) 0 0 / 2px 2px;
}

.watermark { position: absolute; right: 14px; bottom: 8px; display: flex; flex-direction: column; align-items: flex-end; }
.watermark svg { width: 28px; height: 28px; margin-right: 15px; }
.watermark p {
  margin: -4px 0 0;
  color: #2e3ad8;
  font: italic bold 14px/20px "DejaVu Sans", sans-serif;
  text-shadow: 1px 1px #e8efff, -1px -1px #e8efff, 1px -1px #e8efff, -1px 1px #e8efff, 2px 0 1px #e8efff, -2px 0 1px #e8efff, 0 2px 1px #e8efff;
}
.watermark b { font-size: 20px; }
```
